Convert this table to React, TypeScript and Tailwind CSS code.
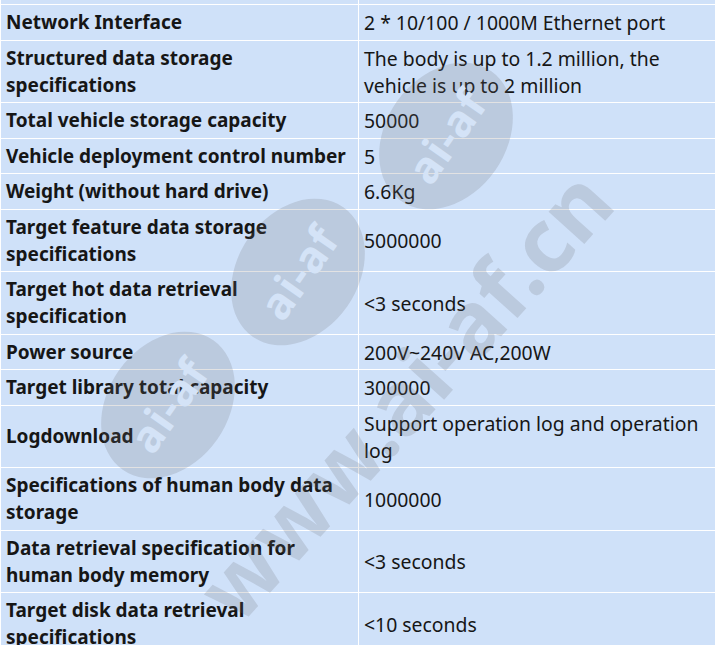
const rows: [string, string][] = [
  ['Network Interface', '2 * 10/100 / 1000M Ethernet port'],
  ['Structured data storage specifications', 'The body is up to 1.2 million, the vehicle is up to 2 million'],
  ['Total vehicle storage capacity', '50000'],
  ['Vehicle deployment control number', '5'],
  ['Weight (without hard drive)', '6.6Kg'],
  ['Target feature data storage specifications', '5000000'],
  ['Target hot data retrieval specification', '<3 seconds'],
  ['Power source', '200V~240V AC,200W'],
  ['Target library total capacity', '300000'],
  ['Logdownload', 'Support operation log and operation log'],
  ['Specifications of human body data storage', '1000000'],
  ['Data retrieval specification for human body memory', '<3 seconds'],
  ['Target disk data retrieval specifications', '<10 seconds'],
];

function Stamp({ x, y }: { x: number; y: number }) {
  return (
    <div
      className="absolute flex h-[120px] w-[158px] items-center justify-center rounded-[50%] bg-[rgba(110,110,115,0.2)] -rotate-[55deg]"
      style={{ left: x - 79, top: y - 60 }}
    >
      <span className="text-[44px] font-bold leading-none tracking-[1px] text-[#d4e3f7]">ai-af</span>
    </div>
  );
}

export default function App() {
  return (
    <div className="relative h-[645px] w-[715px] overflow-hidden bg-[#cfe1f9] font-['Noto_Sans','Open_Sans',sans-serif] leading-[27px] text-[#161616]">
      <table className="-mt-[31px] w-[717px] table-fixed border-collapse">
        <colgroup>
          <col className="w-[358px]" />
          <col />
        </colgroup>
        <tbody>
          <tr>
            <td className="h-[35px] border border-white" />
            <td className="border border-white" />
          </tr>
          {rows.map(([k, v]) => (
            <tr key={k}>
              <td className="border border-white pl-[5px] pr-[4px] pt-[4px] pb-[3.5px] align-middle text-[19px] font-bold">{k}</td>
              <td className="border border-white pl-[5px] pr-[8px] pt-[4px] pb-[3.5px] align-middle text-[19.4px]">{v}</td>
            </tr>
          ))}
        </tbody>
      </table>

      {/* watermark */}
      <div className="pointer-events-none absolute inset-0">
        <Stamp x={446} y={136} />
        <Stamp x={298} y={272} />
        <Stamp x={168} y={405} />
        <div
          className="absolute whitespace-nowrap text-[88px] font-bold leading-none text-[rgba(110,110,115,0.2)] -rotate-[48deg]"
          style={{ left: 120, top: 350 }}
        >
          www.ai-af.cn
        </div>
      </div>
    </div>
  );
}
